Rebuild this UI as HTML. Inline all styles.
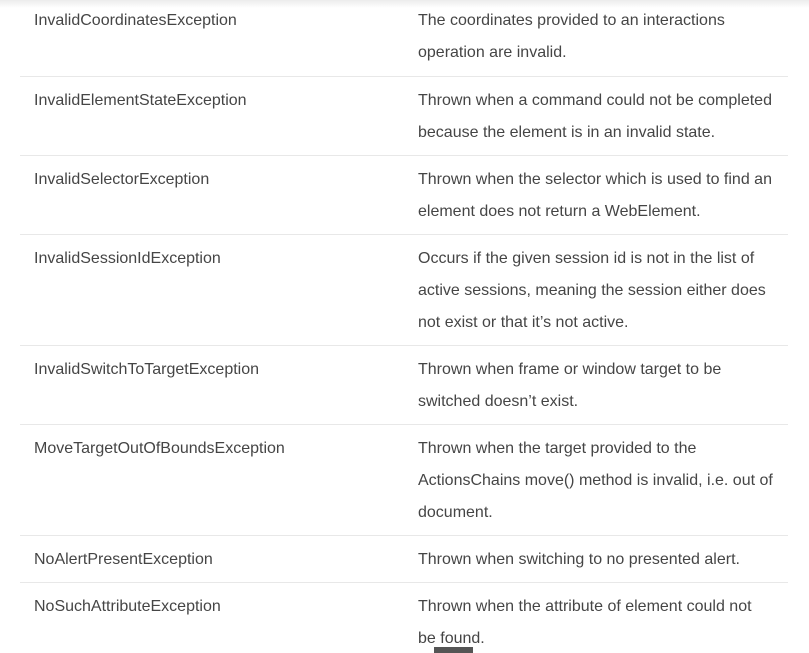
<!DOCTYPE html>
<html><head><meta charset="utf-8"><style>
html,body{margin:0;padding:0;background:#fff;width:809px;height:653px;overflow:hidden;position:relative}
body{font-family:"Liberation Sans",Arial,sans-serif;font-size:16px;color:#454545}
.shadow{position:absolute;left:0;top:0;width:809px;height:8px;background:linear-gradient(#ececec,rgba(255,255,255,0));z-index:2}
.row{position:absolute;left:20px;width:768px;border-bottom:1px solid #e8e8e8;box-sizing:border-box}
.c1,.c2{position:absolute;top:8px;line-height:32px;white-space:nowrap}
.c1{left:14px}
.c2{left:398px}
.bar{position:absolute;left:434px;top:647px;width:39px;height:6px;background:#555}
</style></head><body>
<div class="shadow"></div>
<div class="row" style="top:-3px;height:80px"><div class="c1">InvalidCoordinatesException</div><div class="c2">The coordinates provided to an interactions<br>operation are invalid.</div></div>
<div class="row" style="top:77px;height:79px"><div class="c1">InvalidElementStateException</div><div class="c2">Thrown when a command could not be completed<br>because the element is in an invalid state.</div></div>
<div class="row" style="top:156px;height:79px"><div class="c1">InvalidSelectorException</div><div class="c2">Thrown when the selector which is used to find an<br>element does not return a WebElement.</div></div>
<div class="row" style="top:235px;height:111px"><div class="c1">InvalidSessionIdException</div><div class="c2">Occurs if the given session id is not in the list of<br>active sessions, meaning the session either does<br>not exist or that it’s not active.</div></div>
<div class="row" style="top:346px;height:79px"><div class="c1">InvalidSwitchToTargetException</div><div class="c2">Thrown when frame or window target to be<br>switched doesn’t exist.</div></div>
<div class="row" style="top:425px;height:111px"><div class="c1">MoveTargetOutOfBoundsException</div><div class="c2">Thrown when the target provided to the<br>ActionsChains move() method is invalid, i.e. out of<br>document.</div></div>
<div class="row" style="top:536px;height:47px"><div class="c1">NoAlertPresentException</div><div class="c2">Thrown when switching to no presented alert.</div></div>
<div class="row" style="top:583px;height:79px;border:none"><div class="c1">NoSuchAttributeException</div><div class="c2">Thrown when the attribute of element could not<br>be found.</div></div>
<div class="bar"></div>
</body></html>
